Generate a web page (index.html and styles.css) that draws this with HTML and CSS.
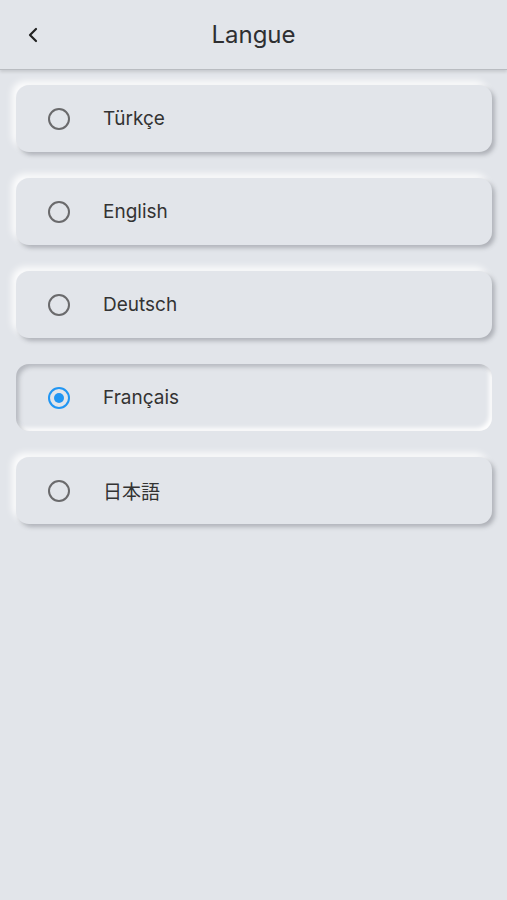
FILE: index.html
```html
<!DOCTYPE html>
<html lang="fr">
<head>
    <meta charset="UTF-8">
    <meta name="viewport" content="width=device-width, initial-scale=1.0">
    <title>Langue</title>
    <link rel="stylesheet" href="styles.css">
</head>
<body>
    <div class="header">
        <div class="back-button">
            <svg width="14" height="16" viewBox="0 0 14 16">
                <path d="M9 2 L3 8 L9 14" fill="none" stroke="#222" stroke-width="2.2" stroke-linecap="round" stroke-linejoin="round"/>
            </svg>
        </div>
        <h1>Langue</h1>
    </div>

    <!-- Language options -->
    <div class="language-list">
        <div class="language-option">
            <span class="radio"></span>
            <span class="label">Türkçe</span>
        </div>
        <div class="language-option">
            <span class="radio"></span>
            <span class="label">English</span>
        </div>
        <div class="language-option">
            <span class="radio"></span>
            <span class="label">Deutsch</span>
        </div>
        <div class="language-option selected">
            <span class="radio"></span>
            <span class="label">Français</span>
        </div>
        <div class="language-option">
            <span class="radio"></span>
            <span class="label">日本語</span>
        </div>
    </div>
</body>
</html>
```

FILE: styles.css
```css
html {
    background-color: #e2e5ea;
}

body {
    font-family: Inter, "Noto Sans CJK JP", sans-serif;
    background-color: #e2e5ea;
    margin: 0;
    padding: 0;
    min-height: 900px;
    color: #333;
}

.header {
    height: 69px;
    display: flex;
    align-items: center;
    justify-content: center;
    position: relative;
    border-bottom: 1px solid #b9bcc1;
    box-shadow: 0 2px 3px rgba(0, 0, 0, 0.12);
}

.header h1 {
    margin: 0;
    font-size: 24px;
    font-weight: 400;
    color: #2e2f31;
}

.back-button {
    position: absolute;
    left: 27px;
    top: 27px;
    width: 14px;
    height: 16px;
    cursor: pointer;
}

.language-list {
    display: flex;
    flex-direction: column;
    gap: 26px;
    padding: 15px 15px 40px 16px;
}

.language-option {
    height: 67px;
    display: flex;
    align-items: center;
    padding-left: 32px;
    border-radius: 13px;
    background-color: #e2e5ea;
    box-shadow: 3px 3px 4px rgba(80, 84, 92, 0.35), -4px -4px 7px rgba(255, 255, 255, 0.9);
    cursor: pointer;
}

.language-option.selected {
    box-shadow: inset 3px 3px 4px rgba(80, 84, 92, 0.3), inset -3px -3px 4px rgba(255, 255, 255, 0.95);
}

.radio {
    width: 18px;
    height: 18px;
    border: 2px solid #6a6a6c;
    border-radius: 50%;
    box-sizing: content-box;
    position: relative;
}

.selected .radio {
    border-color: #2196f3;
}

.selected .radio::after {
    content: "";
    position: absolute;
    top: 4px;
    left: 4px;
    width: 10px;
    height: 10px;
    border-radius: 50%;
    background-color: #2196f3;
}

.label {
    margin-left: 33px;
    font-size: 19px;
    color: #333;
}
```
